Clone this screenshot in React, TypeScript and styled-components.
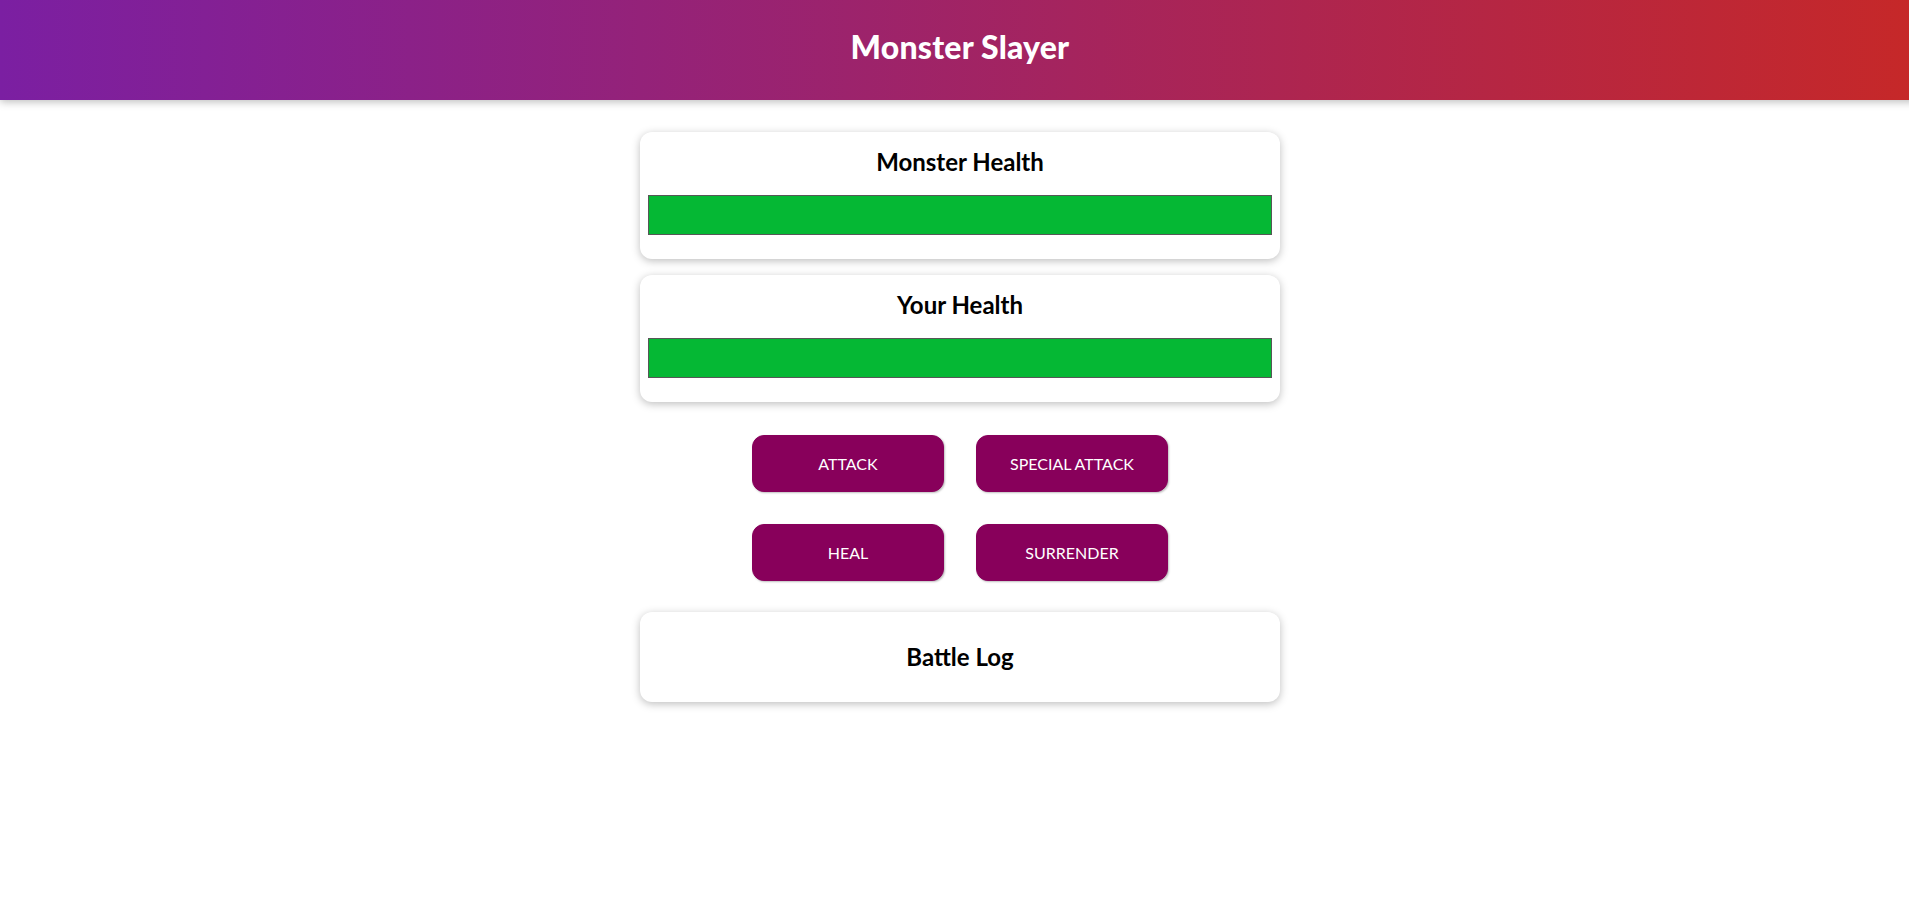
import React from "react";
import styled, { createGlobalStyle } from "styled-components";

const GlobalStyle = createGlobalStyle`
  * { box-sizing: border-box; }
  html { font-family: Lato, "Noto Sans", sans-serif; overflow-x: hidden; }
  body { margin: 0; background: #ffffff; }
`;

const Page = styled.div`
  width: 1920px;
`;

const Header = styled.header`
  height: 100px;
  padding-bottom: 6px;
  display: flex;
  align-items: center;
  justify-content: center;
  background: linear-gradient(to right, #7b1fa2, #c62828);
  color: #ffffff;
  box-shadow: 0 2px 8px rgba(0, 0, 0, 0.26);
  margin-bottom: 32px;
`;

const Title = styled.h1`
  margin: 0;
  font-size: 32px;
  font-weight: 900;
  line-height: 40px;
  letter-spacing: 0.2px;
`;

const Section = styled.section`
  width: 640px;
  margin: 0 auto;
`;

const Card = styled.div`
  text-align: center;
  padding: 8px;
  border-radius: 12px;
  background: #ffffff;
  box-shadow: 0 2px 8px rgba(0, 0, 0, 0.26);
  margin: 0 0 16.6px;
`;

const CardTitle = styled.h2<{ $log?: boolean }>`
  margin: ${(p) => (p.$log ? "21px 0" : "5.5px 0 0")};
  font-size: 24px;
  font-weight: 700;
  line-height: 32px;
  color: #000000;
`;

const HealthBar = styled.div`
  width: 100%;
  height: 40px;
  margin: 17.2px 0 16px;
  border: 1px solid #575757;
  background: #fde5e5;
`;

const HealthValue = styled.div`
  height: 100%;
  background-color: #05b834;
`;

const Controls = styled.div`
  text-align: center;
  margin: 0 0 15.4px;
`;

const Row = styled.div`
  display: flex;
  justify-content: center;
`;

const Button = styled.button`
  font-family: inherit;
  font-size: 16px;
  line-height: 23px;
  border: 1px solid #88005b;
  background-color: #88005b;
  color: #ffffff;
  padding: 16px 24px;
  border-radius: 12px;
  margin: 16px;
  width: 192px;
  cursor: pointer;
  box-shadow: 1px 1px 2px rgba(0, 0, 0, 0.26);
`;

function Health({ label, value }: { label: string; value: number }) {
  return (
    <Card>
      <CardTitle>{label}</CardTitle>
      <HealthBar>
        <HealthValue style={{ width: `${value}%` }} />
      </HealthBar>
    </Card>
  );
}

export default function App() {
  return (
    <Page>
      <GlobalStyle />
      <Header>
        <Title>Monster Slayer</Title>
      </Header>
      <Section>
        <Health label="Monster Health" value={100} />
        <Health label="Your Health" value={100} />
        <Controls>
          <Row>
            <Button>ATTACK</Button>
            <Button>SPECIAL ATTACK</Button>
          </Row>
          <Row>
            <Button>HEAL</Button>
            <Button>SURRENDER</Button>
          </Row>
        </Controls>
        <Card>
          <CardTitle $log>Battle Log</CardTitle>
        </Card>
      </Section>
    </Page>
  );
}
